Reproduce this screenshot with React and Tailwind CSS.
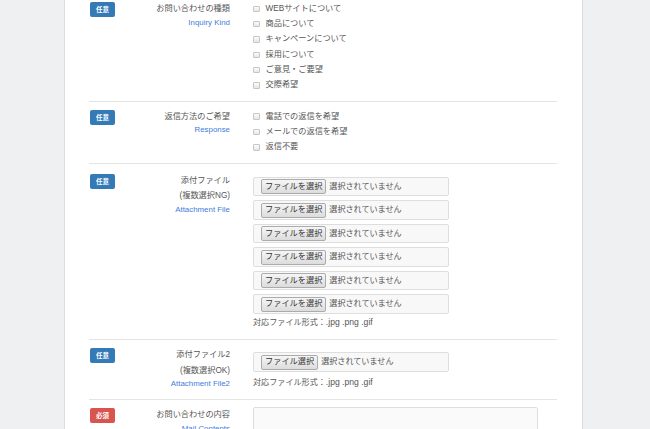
import React from 'react';

const jp = { fontFamily: '"Helvetica Neue", "Liberation Sans", "Noto Sans CJK JP", sans-serif' };

function Badge({ required }) {
  return (
    <span className={`mt-[1px] ml-[1px] flex h-[15px] w-[25px] items-center justify-center rounded-[2px] text-[6.5px] font-bold text-white ${required ? 'bg-[#d9534f]' : 'bg-[#337ab7]'}`}>
      {required ? '必須' : '任意'}
    </span>
  );
}

function Label({ lines, en }) {
  return (
    <div className="w-[115px] shrink-0 text-right">
      {lines.map((l) => (
        <div key={l} className="text-[8.2px] leading-[15.3px] text-[#555]">{l}</div>
      ))}
      <div className="text-[7.9px] leading-[12px] text-[#3f7ddb]">{en}</div>
    </div>
  );
}

function Check({ text }) {
  return (
    <label className="flex h-[15.3px] items-center text-[8.2px] text-[#555]">
      <span className="mr-[6px] h-[6.5px] w-[6.5px] rounded-[1px] border border-[#c6c6c6] bg-gradient-to-b from-[#fcfcfc] to-[#e6e6e6]" />
      {text}
    </label>
  );
}

function FileBox({ btn = 'ファイルを選択' }) {
  return (
    <div className="flex h-[19.5px] w-[196px] items-center rounded-[2px] border border-[#dedede] bg-[#f8f8f8] pl-[7px]">
      <span className="flex h-[15px] items-center rounded-[2px] border border-[#ababab] bg-gradient-to-b from-[#f6f6f6] to-[#dcdcdc] px-[3px] text-[8.2px] text-[#333]">{btn}</span>
      <span className="ml-[3px] text-[8.1px] text-[#555]">選択されていません</span>
    </div>
  );
}

function Formats() {
  return (
    <div className="text-[8.1px] leading-[15px] text-[#555]">
      対応ファイル形式：<span className="text-[8.6px]">.jpg .png .gif</span>
    </div>
  );
}

function Row({ required, className, children, label }) {
  return (
    <div className={`flex items-start border-b border-[#e4e4e4] ${className}`}>
      <div className="w-[26px] shrink-0"><Badge required={required} /></div>
      {label}
      <div className="ml-[23px] flex-1">{children}</div>
    </div>
  );
}

export default function App() {
  const kinds = ['WEBサイトについて', '商品について', 'キャンペーンについて', '採用について', 'ご意見・ご要望', '交際希望'];
  const responses = ['電話での返信を希望', 'メールでの返信を希望', '返信不要'];
  return (
    <div className="h-[429px] w-[650px] overflow-hidden bg-[#eef0f2]" style={jp}>
      <div className="ml-[64px] h-full w-[519px] border-x border-[#dcdcdc] bg-white pl-[24px] pr-[25px]">
        <Row className="pt-[1.3px] pb-[8px]" label={<Label lines={['お問い合わせの種類']} en="Inquiry Kind" />}>
          {kinds.map((k) => <Check key={k} text={k} />)}
        </Row>
        <Row className="pt-[7px] pb-[8px]" label={<Label lines={['返信方法のご希望']} en="Response" />}>
          {responses.map((k) => <Check key={k} text={k} />)}
        </Row>
        <Row className="pt-[9px] pb-[9.5px]" label={<Label lines={['添付ファイル', '(複数選択NG)']} en="Attachment File" />}>
          <div className="mt-[4px] flex flex-col gap-[4px]">
            {[0, 1, 2, 3, 4, 5].map((i) => <FileBox key={i} />)}
          </div>
          <div className="mt-[1px]"><Formats /></div>
        </Row>
        <Row className="pt-[7px] pb-[9px]" label={<Label lines={['添付ファイル2', '(複数選択OK)']} en="Attachment File2" />}>
          <div className="mt-[5px]">
            <FileBox btn="ファイル選択" />
          </div>
          <div className="mt-[3.5px]"><Formats /></div>
        </Row>
        <Row required className="pt-[7px]" label={<Label lines={['お問い合わせの内容']} en="Mail Contents" />}>
          <div className="h-[80px] w-[285px] rounded-[2px] border border-[#dedede] bg-[#fafafa]" />
        </Row>
      </div>
    </div>
  );
}
